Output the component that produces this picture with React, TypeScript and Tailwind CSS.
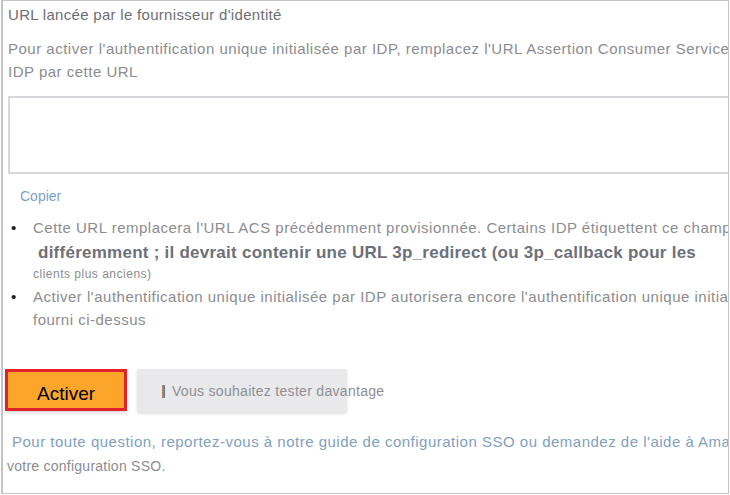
export default function App() {
  return (
    <div className="h-[495px] w-[730px] bg-white font-['Liberation_Sans',Arial,sans-serif]">
      <div className="ml-[1px] h-[494px] w-[728px] overflow-hidden border border-[#c4c4c4] border-l-2">
        <div className="w-[900px] pl-[5px]">
          {/* Title */}
          <p className="pt-[4px] text-[15px] leading-[20px] text-[#6e6e73] tracking-[0.3px] whitespace-nowrap">
            URL lancée par le fournisseur d'identité
          </p>

          {/* Description */}
          <div className="mt-[12px] text-[15px] leading-[23px] text-[#8c8c90] tracking-[0.5px] whitespace-nowrap">
            <p>
              Pour activer l'authentification unique initialisée par IDP, remplacez l'URL Assertion Consumer Service
            </p>
            <p>IDP par cette URL</p>
          </div>

          {/* URL field */}
          <div className="mt-[13px] h-[78px] border-2 border-[#d6d7db] bg-white" />

          <p className="mt-[12px] pl-[12px] text-[14px] leading-[20px] text-[#7c9fce] whitespace-nowrap">
            Copier
          </p>

          {/* Notes */}
          <ul className="mt-[11px] text-[15px] text-[#8c8c90] tracking-[0.5px]">
            <li className="flex">
              <span className="w-[25px] pl-[3px] text-[#222] leading-[22px]">•</span>
              <div>
                <p className="leading-[22px] whitespace-nowrap">
                  Cette URL remplacera l'URL ACS précédemment provisionnée. Certains IDP étiquettent ce champ
                </p>
                <p className="pl-[5px] text-[17px] font-bold leading-[27px] text-[#6d7079] tracking-[0.25px] whitespace-nowrap">
                  différemment ; il devrait contenir une URL 3p_redirect (ou 3p_callback pour les
                </p>
                <p className="text-[12px] leading-[16px] tracking-[0.5px] whitespace-nowrap">
                  clients plus anciens)
                </p>
              </div>
            </li>
            <li className="mt-[3px] flex">
              <span className="w-[25px] pl-[3px] text-[#222] leading-[23px]">•</span>
              <div>
                <p className="leading-[23px] whitespace-nowrap">
                  Activer l'authentification unique initialisée par IDP autorisera encore l'authentification unique initialisée
                </p>
                <p className="leading-[23px] whitespace-nowrap">fourni ci-dessus</p>
              </div>
            </li>
          </ul>

          {/* Actions */}
          <div className="mt-[38px] flex items-start gap-[10px]">
            <button className="-ml-[3px] flex h-[42px] w-[122px] items-center justify-center border-[3px] border-[#e3212b] bg-[#fba62b] pt-[9px] text-[19px] text-black shadow-[0_2px_3px_rgba(0,0,0,0.15)]">
              Activer
            </button>
            <button className="flex h-[43px] w-[210px] items-center rounded-[2px] bg-[#e9e9eb] pl-[25px] pt-[1px] text-[14px] text-[#8e8e93] tracking-[0.3px] shadow-[0_2px_3px_rgba(0,0,0,0.12)] whitespace-nowrap">
              <span className="mr-[7px] flex h-[13px]">
                <span className="h-full w-[2px] bg-[#c87a3a]" />
                <span className="h-full w-[1px] bg-[#4a7fc0]" />
              </span>
              Vous souhaitez tester davantage
            </button>
          </div>

          {/* Help */}
          <div className="mt-[17px] text-[15px] leading-[25px] whitespace-nowrap">
            <p className="pl-[4px] text-[#7f9fc2] tracking-[0.5px]">
              Pour toute question, reportez-vous à notre guide de configuration SSO ou demandez de l'aide à Amazon
            </p>
            <p className="-ml-[1px] text-[14px] text-[#8c8c90] tracking-[0.25px]">votre configuration SSO.</p>
          </div>
        </div>
      </div>
    </div>
  );
}
